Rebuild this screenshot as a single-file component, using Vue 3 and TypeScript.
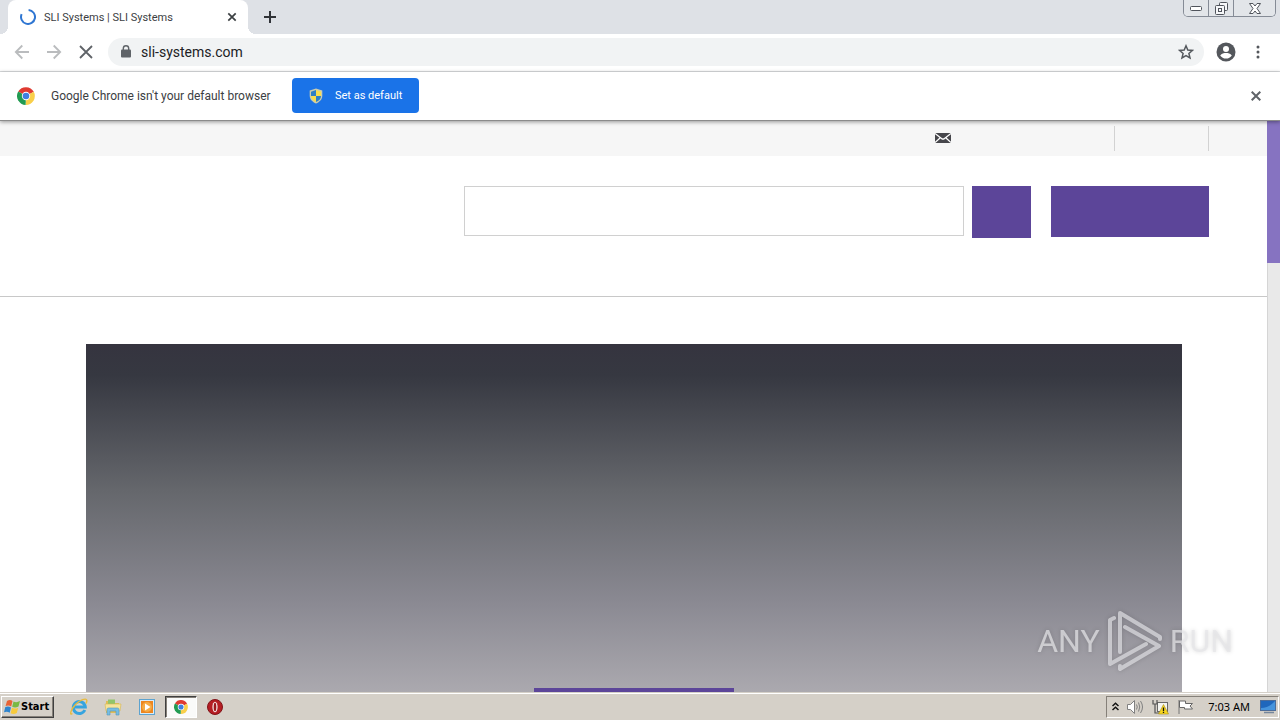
<script setup lang="ts">
import { ref } from 'vue'

const address = ref('sli-systems.com')
const query = ref('')
const pageTitle = 'SLI Systems | SLI Systems'
</script>

<template>
  <div class="desktop">
    <header class="tabstrip">
      <div class="tab">
        <svg class="spinner" viewBox="0 0 16 16" aria-hidden="true">
          <path d="M8.6 1A7 7 0 1 1 1.6 5.2" fill="none" stroke="#2f76d2" stroke-width="2" />
        </svg>
        <span class="tab-title">{{ pageTitle }}</span>
        <button class="plain" aria-label="Close tab">
          <svg width="10" height="10" viewBox="0 0 10 10"><path d="M1.3 1.3 8.7 8.7M8.7 1.3 1.3 8.7" stroke="#3c4043" stroke-width="1.7" /></svg>
        </button>
      </div>
      <button class="plain new-tab" aria-label="New tab">
        <svg width="12" height="12" viewBox="0 0 12 12"><path d="M6 0V12M0 6H12" stroke="#303338" stroke-width="2" /></svg>
      </button>
      <div class="window-buttons">
        <button aria-label="Minimize">
          <svg width="12" height="6" viewBox="0 0 12 6"><rect x=".5" y="1.5" width="11" height="4" rx="1" fill="#fff" stroke="#50545c" /></svg>
        </button>
        <button aria-label="Restore">
          <svg width="13" height="13" viewBox="0 0 13 13" fill="#f6f7f9" stroke="#50545c"><rect x="4.500" y=".5" width="8" height="8" rx="1" /><rect x=".5" y="3.500" width="9" height="9" rx="1" /><rect x="3.500" y="6.500" width="3" height="3" /></svg>
        </button>
        <button class="wide" aria-label="Close">
          <svg width="12" height="11" viewBox="0 0 12 11"><path d="M.5.5H4L6 3 8 .5H11.500L8 5.500 11.500 10.500H8L6 8 4 10.500H.5L4 5.500Z" fill="#fff" stroke="#50545c" stroke-linejoin="round" /></svg>
        </button>
      </div>
    </header>

    <nav class="toolbar" aria-label="Browser">
      <button class="plain nav" aria-label="Back">
        <svg width="16" height="16" viewBox="0 0 16 16"><path d="M15 8H2M8.300 1.500 1.800 8 8.300 14.500" fill="none" stroke="#babcbe" stroke-width="1.800" /></svg>
      </button>
      <button class="plain nav" aria-label="Forward">
        <svg width="16" height="16" viewBox="0 0 16 16"><path d="M1 8H14M7.700 1.500 14.200 8 7.700 14.500" fill="none" stroke="#babcbe" stroke-width="1.800" /></svg>
      </button>
      <button class="plain nav" aria-label="Stop loading">
        <svg width="14" height="14" viewBox="0 0 14 14"><path d="M1 1 13 13M13 1 1 13" stroke="#5f6368" stroke-width="1.800" /></svg>
      </button>
      <div class="omnibox">
        <svg width="10" height="13" viewBox="0 0 10 13"><rect y="4.500" width="10" height="8" rx="1" fill="#5f6368" /><path d="M2.300 5V3.400a2.700 2.700 0 0 1 5.400 0V5" fill="none" stroke="#5f6368" stroke-width="1.400" /></svg>
        <input v-model="address" type="text" aria-label="Address" />
        <button class="plain" aria-label="Bookmark this page">
          <svg width="16" height="16" viewBox="0 0 16 16"><path d="M8 1.800 9.800 6 14.400 6.400 10.900 9.400 12 13.900 8 11.500 4 13.900 5.100 9.400 1.600 6.400 6.200 6Z" fill="none" stroke="#54585d" stroke-width="1.500" /></svg>
        </button>
      </div>
      <button class="plain profile" aria-label="Profile">
        <svg width="20" height="20" viewBox="0 0 20 20"><circle cx="10" cy="10" r="9.500" fill="#54575c" /><circle cx="10" cy="6.900" r="3" fill="#fff" /><path d="M4.200 13.400C5.500 11.600 8 11 10 11s4.500.6 5.800 2.400A7 7 0 0 1 10 16.500a7 7 0 0 1-5.800-3.100Z" fill="#fff" /></svg>
      </button>
      <button class="plain menu" aria-label="Menu">
        <svg width="4" height="14" viewBox="0 0 4 14" fill="#54575c"><circle cx="2" cy="2" r="1.500" /><circle cx="2" cy="7" r="1.500" /><circle cx="2" cy="12" r="1.500" /></svg>
      </button>
    </nav>

    <section class="infobar">
      <svg class="chrome" viewBox="0 0 18 18" aria-hidden="true">
        <path d="M9 9 1.200 4.500A9 9 0 0 1 16.800 4.800Z" fill="#df3a31" /><path d="M9 9 16.800 4.800A9 9 0 0 1 8.600 18Z" fill="#f9cf4a" /><path d="M9 9 8.600 18A9 9 0 0 1 1.200 4.500Z" fill="#229b52" /><circle cx="9" cy="9" r="4.200" fill="#fff" /><circle cx="9" cy="9" r="3.300" fill="#3f7fe0" />
      </svg>
      <span class="notice">Google Chrome isn't your default browser</span>
      <button class="default-button">
        <svg width="14" height="16" viewBox="0 0 14 16">
          <path d="M7 .5 13.300 2.600V7.500C13.300 11.500 10.500 14 7 15.500 3.500 14 .7 11.500.7 7.500V2.600Z" fill="#c9ccb0" /><path d="M7 2V8H2V3.700Z" fill="#2f7fc4" /><path d="M7 8H12C12 11 9.800 12.900 7 14Z" fill="#2f7fc4" /><path d="M7 2 12 3.700V8H7ZM2 8H7V14C4 12.800 2 11 2 8Z" fill="#f8dd4e" />
        </svg>
        Set as default
      </button>
      <button class="plain dismiss" aria-label="Dismiss">
        <svg width="10" height="10" viewBox="0 0 10 10"><path d="M.7.7 9.300 9.300M9.300.7.7 9.300" stroke="#5f6368" stroke-width="2" /></svg>
      </button>
    </section>

    <div class="viewport">
      <main class="site">
        <div class="utility">
          <a class="mail" href="#contact" aria-label="Contact">
            <svg width="16" height="10" viewBox="0 0 16 10"><rect width="16" height="10" fill="#46464b" /><path d="M0 .5 6.500 5.500Q8 6.800 9.500 5.500L16 .5M0 9.500 5 5M16 9.500 11 5" fill="none" stroke="#fff" stroke-width="1.300" /></svg>
          </a>
          <a class="slot first" href="#login" aria-label="Log in"></a>
          <a class="slot" href="#support" aria-label="Support"></a>
        </div>
        <div class="masthead">
          <form class="search" @submit.prevent>
            <input v-model="query" type="search" aria-label="Search" />
            <button aria-label="Submit search"></button>
          </form>
          <button class="demo" aria-label="Request a demo"></button>
        </div>
        <section class="hero">
          <button class="hero-cta" aria-label="Learn more"></button>
        </section>
      </main>
      <div class="scrollbar"><div class="thumb"></div></div>
      <div class="watermark">
        <span>ANY</span>
        <svg width="56" height="62" viewBox="0 0 56 62" fill="none" stroke-width="4" stroke-linecap="round" stroke-linejoin="round" aria-hidden="true">
          <path d="M13 42V3L53 27V29M18 17 52 36 13 59V56M7 8 3 10V54L39 34" />
        </svg>
        <span>RUN</span>
      </div>
    </div>

    <footer class="taskbar">
      <button class="start">
        <svg width="17" height="16" viewBox="0 0 17 16"><path d="M3 2Q6 0 8.500 2L7.200 7.400Q4.500 5.600 1.600 7Z" fill="#e86335" /><path d="M9.500 2.500Q12.500 4 16 2L14.500 7.600Q11 9.300 8.200 7.700Z" fill="#79b943" /><path d="M1.300 8Q4.300 6.600 7 8.400L5.700 13.700Q3 12 0 13.300Z" fill="#2f85ce" /><path d="M8 8.800Q11 10.400 14.200 8.700L12.800 14Q9.500 15.800 6.600 14.200Z" fill="#f7ca3b" /></svg>
        Start
      </button>
      <button class="task" aria-label="Internet Explorer">
        <svg width="18" height="18" viewBox="0 0 18 18" fill="none"><path d="M14.800 12A6 6 0 1 1 15.300 9H5" stroke="#36a4df" stroke-width="3" /><path d="M2.400 15.500C-1 18 1 11 5.500 6.500S16-.5 16.800 2.200C17 3.300 16.500 4.500 16 5.500" stroke="#e8bb3e" stroke-width="1.400" /></svg>
      </button>
      <button class="task" aria-label="Windows Explorer">
        <svg width="18" height="18" viewBox="0 0 18 18"><path d="M2 3H7L8.500 5H15V15H2Z" fill="#dfbd58" /><path d="M4 1.500H11V6H4Z" fill="#91c56a" /><path d="M1 6H17L16 13H2Z" fill="#f6e49a" stroke="#d5b554" stroke-width=".6" /><path d="M3 17V11.500Q3 10 4.500 10H13.500Q15 10 15 11.500V17H12V13H6V17Z" fill="#77bde2" stroke="#5499bd" stroke-width=".6" /></svg>
      </button>
      <button class="task" aria-label="Media Player">
        <svg width="18" height="18" viewBox="0 0 18 18"><rect x="1.500" y="1.500" width="15" height="15" fill="#d9ecf8" stroke="#5da3cf" /><rect x="3" y="3" width="12" height="12" fill="#ed861f" /><circle cx="9" cy="9" r="5" fill="#f5ab45" /><path d="M7 5.500 12.500 9 7 12.500Z" fill="#fff" /></svg>
      </button>
      <button class="task active" aria-label="Google Chrome">
        <svg width="14" height="14" viewBox="0 0 18 18">
          <path d="M9 9 1.200 4.500A9 9 0 0 1 16.800 4.800Z" fill="#df3a31" /><path d="M9 9 16.800 4.800A9 9 0 0 1 8.600 18Z" fill="#f9cf4a" /><path d="M9 9 8.600 18A9 9 0 0 1 1.200 4.500Z" fill="#229b52" /><circle cx="9" cy="9" r="4.200" fill="#fff" /><circle cx="9" cy="9" r="3.300" fill="#3f7fe0" />
        </svg>
      </button>
      <button class="task" aria-label="Opera">
        <svg width="16" height="16" viewBox="0 0 16 16"><circle cx="8" cy="8" r="7.500" fill="#b51d23" stroke="#811318" /><ellipse cx="8" cy="8" rx="2.600" ry="5.300" fill="#f4e4e4" /><ellipse cx="8" cy="8" rx="1.300" ry="4.300" fill="#9c171c" /></svg>
      </button>
      <div class="tray">
        <button class="plain" aria-label="Show hidden icons">
          <svg width="7" height="9" viewBox="0 0 7 9"><path d="M.5 4 3.500 1.300 6.500 4M.5 8 3.500 5.300 6.500 8" fill="none" stroke="#111" stroke-width="1.500" /></svg>
        </button>
        <button class="plain" aria-label="Volume">
          <svg width="17" height="16" viewBox="0 0 17 16" fill="none" stroke="#808080"><path d="M.5 5.500H3.500L7.500 1.500V14.500L3.500 10.500H.5Z" fill="#fff" /><path d="M9.500 5.500Q11 8 9.500 10.500M11.500 3.500Q14 8 11.500 12.500M13.500 2Q17.500 8 13.500 14" /></svg>
        </button>
        <button class="plain" aria-label="Network">
          <svg width="17" height="16" viewBox="0 0 17 16"><rect x="5.500" y="3.500" width="10" height="9" fill="#f4f4f0" stroke="#686868" /><path d="M1 1V5H5V1M3 5V14H7" fill="none" stroke="#555" stroke-width="1.200" /><path d="M11.500 5.500 16.500 15H6.500Z" fill="#f8d720" stroke="#a88d12" stroke-width=".6" /><path d="M11.500 8.500V12M11.500 12.800V14" stroke="#111" stroke-width="1.300" /></svg>
        </button>
        <button class="plain" aria-label="Action Center">
          <svg width="17" height="16" viewBox="0 0 17 16"><path d="M2 1V15" stroke="#777" /><path d="M2.500 2H8.500V4.500H15.500L13 7 15.500 10H7.500V8.500H2.500Z" fill="#fff" stroke="#666" /></svg>
        </button>
        <time>7:03 AM</time>
        <button class="plain" aria-label="Show desktop">
          <svg width="16" height="14" viewBox="0 0 16 14"><rect x=".5" y=".5" width="15" height="10" fill="#1f67bc" stroke="#4d6d99" /><path d="M1 8Q9 8 15 1V10H1Z" fill="#4694dc" /><path d="M4 12.500H14" stroke="#75869b" stroke-width="1.500" /></svg>
        </button>
      </div>
    </footer>
  </div>
</template>

<style>
body { margin: 0; }
</style>

<style scoped>
.desktop { height: 100vh; min-height: 480px; display: flex; flex-direction: column; overflow: hidden; background: #fff; font-family: Roboto, "Noto Sans", sans-serif; font-size: 12px; color: #3c4043; }
.desktop * { box-sizing: border-box; }
button, input { font: inherit; margin: 0; }
svg { display: block; flex: none; }
.plain { border: 0; padding: 0; background: none; display: grid; place-items: center; flex: none; }

.tabstrip { height: 34px; flex: none; display: flex; align-items: flex-start; background: #dee1e6; padding: 0 4px 0 8px; }
.tab { position: relative; width: 240px; height: 34px; display: flex; align-items: center; gap: 8px; padding: 0 11px 0 12px; border-radius: 8px 8px 0 0; background: #fff; }
.tab::before, .tab::after { content: ""; position: absolute; bottom: 0; width: 8px; height: 8px; }
.tab::before { left: -8px; background: radial-gradient(circle at 0 0, #dee1e6 8px, #fff 8px); }
.tab::after { right: -8px; background: radial-gradient(circle at 100% 0, #dee1e6 8px, #fff 8px); }
.spinner { width: 16px; height: 16px; }
.tab-title { flex: 1; font-size: 11px; white-space: nowrap; }
.new-tab { width: 28px; height: 34px; margin-left: 8px; }
.window-buttons { display: flex; height: 17px; margin-left: auto; border: 1px solid #858b96; border-top: 0; border-radius: 0 0 5px 5px; overflow: hidden; }
.window-buttons button { width: 25px; padding: 0; border: 0; border-right: 1px solid #858b96; background: #e2e5e9; display: grid; place-items: center; }
.window-buttons .wide { width: 41px; border-right: 0; }

.toolbar { height: 38px; flex: none; display: flex; align-items: center; padding: 0 12px 2px 6px; border-bottom: 1px solid #dcdee0; }
.nav { width: 32px; height: 28px; }
.omnibox { flex: 1; height: 28px; margin-left: 6px; display: flex; align-items: center; gap: 10px; padding: 0 10px 0 13px; border-radius: 14px; background: #f1f3f4; }
.omnibox input { flex: 1; min-width: 0; padding: 0; border: 0; outline: 0; background: none; font-size: 14px; color: #202124; }
.profile { width: 28px; margin-left: 8px; }
.menu { width: 20px; margin-left: 8px; }

.infobar { position: relative; z-index: 1; height: 49px; flex: none; display: flex; align-items: center; padding: 0 19px 1px 17px; background: #fff; border-bottom: 1px solid #8b8b8b; box-shadow: 0 1px 4px #0006; }
.chrome { width: 18px; height: 18px; }
.notice { margin-left: 16px; width: 241px; white-space: nowrap; }
.default-button { width: 127px; height: 35px; display: flex; align-items: center; gap: 12px; padding: 0 17px; border: 0; border-radius: 4px; background: #1a73e8; color: #fff; font-size: 11px; white-space: nowrap; }
.dismiss { margin-left: auto; }

.viewport { position: relative; flex: 1; min-height: 0; display: flex; overflow: hidden; }
.site { flex: 1; display: flex; flex-direction: column; }
.utility { height: 35px; flex: none; display: flex; justify-content: flex-end; align-items: center; padding: 0 58px 1px 0; background: #f6f6f6; }
.mail { margin-right: 163px; }
.slot { width: 94px; height: 25px; border-right: 1px solid #d2d2d2; }
.slot.first { width: 1px; }
.masthead { height: 141px; flex: none; display: flex; justify-content: flex-end; align-items: flex-start; gap: 20px; padding: 30px 58px 0; border-bottom: 1px solid #c8c8c8; }
.search { display: flex; gap: 8px; }
.search input { width: 500px; height: 50px; border: 1px solid #d0d0d0; border-radius: 0; background: #fff; padding: 0 12px; appearance: none; }
.search button, .demo, .hero-cta { border: 0; padding: 0; background: #5c4599; }
.search button { width: 59px; height: 52px; }
.demo { width: 158px; height: 51px; }
.hero { flex: 1; margin: 47px 85px 0 86px; display: flex; justify-content: center; align-items: flex-end; background: linear-gradient(#35343f 0, #363841 9%, #65676c 42%, #8a8992 74%, #aba9af 100%); }
.hero-cta { width: 200px; height: 4px; }
.scrollbar { width: 13px; flex: none; background: #e9e9e9; border-left: 1px solid #d5d5d5; }
.thumb { width: 13px; height: 142px; margin-left: -1px; background: #8673c1; }
.watermark { position: absolute; right: 47px; bottom: 20px; display: flex; align-items: center; gap: 7px; color: #e4e4e7b8; font-family: Roboto, "Liberation Sans", sans-serif; font-size: 32px; line-height: 62px; filter: drop-shadow(0 0 2px #0003); pointer-events: none; }
.watermark svg { stroke: #dedee2b8; }

.taskbar { height: 28px; flex: none; display: flex; align-items: center; gap: 2px; padding: 0 1px; background: #d5d0c8; border-top: 1px solid #d5d0c8; box-shadow: inset 0 1px #fff; font-family: "Noto Sans", sans-serif; font-size: 11px; color: #000; }
.start { width: 53px; height: 22px; display: flex; align-items: center; gap: 0; padding: 0 2px; margin-right: 7px; background: #d5d0c8; border: 1px solid; border-color: #fff #404040 #404040 #fff; box-shadow: inset -1px -1px #858079; font-family: "DejaVu Sans Condensed", "Noto Sans", sans-serif; font-weight: 700; font-size: 11px; white-space: nowrap; color: #000; }
.task { width: 32px; height: 22px; padding: 0; display: grid; place-items: center; background: none; border: 0; }
.task.active { background: #fafaf9; border: 1px solid; border-color: #404040 #fff #fff #404040; box-shadow: inset 1px 1px #858079; }
.tray { margin-left: auto; height: 22px; display: flex; align-items: center; gap: 8px; padding: 0 2px 0 5px; border: 1px solid; border-color: #858079 #fff #fff #858079; }
.tray time { margin: 0 2px 0 6px; white-space: nowrap; }
</style>
